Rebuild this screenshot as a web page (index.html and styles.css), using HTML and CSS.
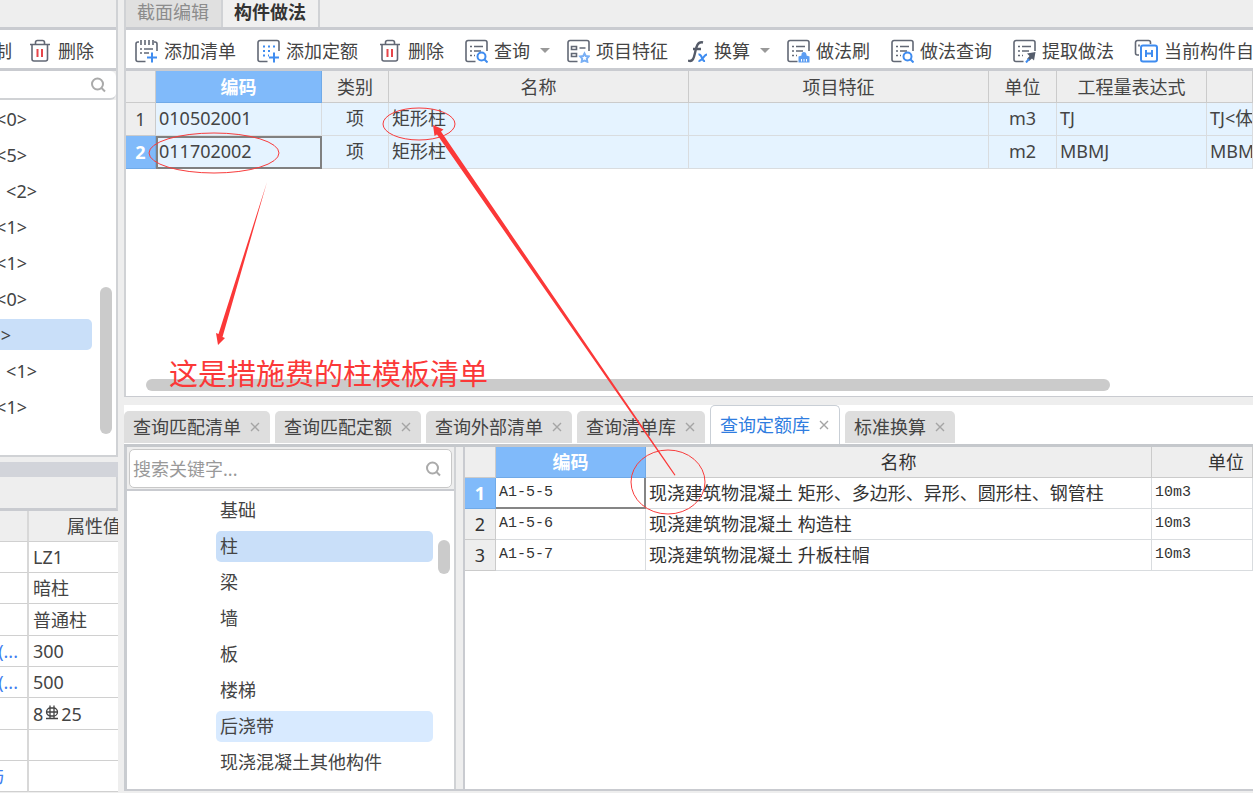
FILE: index.html
```html
<!DOCTYPE html>
<html lang="zh-CN">
<head>
<meta charset="utf-8">
<meta name="viewport" content="width=device-width, initial-scale=1">
<title>构件做法</title>
<link rel="stylesheet" href="styles.css">
</head>
<body>
<svg class="defs" aria-hidden="true">
  <symbol id="trash" viewBox="0 0 24 24">
    <path class="ink" d="M2 5.500h20M4 5.500V20a2 2 0 0 0 2 2h11.500a2 2 0 0 0 2-2V5.500M7.500 5V3.500a2 2 0 0 1 2-2h5a2 2 0 0 1 2 2V5"/>
    <path class="alert" d="M9.500 10v8M14 10v8"/>
  </symbol>
  <symbol id="doc" viewBox="0 0 24 24">
    <path class="ink" d="M11.500 22.500H4a2 2 0 0 1-2-2V3.500a2 2 0 0 1 2-2h17a2 2 0 0 1 2 2V12"/>
  </symbol>
  <symbol id="lines" viewBox="0 0 24 24">
    <path class="ink" d="M6 7.500h2M10 7.500h9M6 12h2M10 12h7M6 16.500h2M10 16.500h1"/>
  </symbol>
  <symbol id="plus" viewBox="0 0 24 24">
    <path class="blue" d="M18 13.500v10M13 18.500h10"/>
  </symbol>
  <symbol id="lens" viewBox="0 0 24 24">
    <circle class="blue" cx="17.500" cy="17.500" r="4"/>
    <path class="blue" d="M20.500 20.500l3 3"/>
  </symbol>
  <symbol id="find" viewBox="0 0 16 16">
    <circle class="gray" cx="7.500" cy="7" r="5.500"/>
    <path class="gray" d="M11.500 11l3.500 3.500"/>
  </symbol>
</svg>

<div class="app">
  <aside class="side">
    <section class="side-top">
      <div class="strip"></div>
      <div class="toolbar side-tools">
        <button type="button">制</button>
        <button type="button"><svg class="icon"><use href="#trash"/></svg>删除</button>
      </div>
      <label class="side-search"><input type="text" aria-label="搜索构件"><svg class="find"><use href="#find"/></svg></label>
      <div class="side-body">
        <ul class="components">
          <li>&lt;0&gt;</li>
          <li>&lt;5&gt;</li>
          <li class="wide">&lt;2&gt;</li>
          <li>&lt;1&gt;</li>
          <li>&lt;1&gt;</li>
          <li>&lt;0&gt;</li>
          <li class="short current">&gt;</li>
          <li class="wide">&lt;1&gt;</li>
          <li>&lt;1&gt;</li>
        </ul>
        <div class="thumb"></div>
      </div>
    </section>
    <section class="props">
      <div class="props-title"></div>
      <div class="props-bar"></div>
      <table class="props-table">
        <colgroup><col class="c-key"><col></colgroup>
        <thead><tr><th></th><th>属性值</th></tr></thead>
        <tbody>
          <tr><td></td><td>LZ1</td></tr>
          <tr><td></td><td>暗柱</td></tr>
          <tr><td></td><td>普通柱</td></tr>
          <tr><td><span class="key">(...</span></td><td>300</td></tr>
          <tr><td><span class="key">(...</span></td><td>500</td></tr>
          <tr><td></td><td>8<svg class="rebar" viewBox="0 0 14 16" role="img" aria-label="钢筋"><rect x="1.500" y="3" width="11" height="8" rx="4"/><path d="M5 0.500v13M9 0.500v13M1 7h12M1 13.500h12"/></svg>25</td></tr>
          <tr><td></td><td></td></tr>
          <tr><td><span class="key tail">与</span></td><td></td></tr>
        </tbody>
      </table>
    </section>
  </aside>

  <main class="work">
    <section class="upper">
      <nav class="strip view-tabs">
        <button type="button">截面编辑</button>
        <button type="button" class="active">构件做法</button>
      </nav>
      <div class="toolbar">
        <button type="button"><svg class="icon" viewBox="0 0 24 24"><path class="ink" d="M11.500 22.500H4a2 2 0 0 1-2-2V5a2 2 0 0 1 2-2h1M20 3h1a2 2 0 0 1 2 2v7M7 1v5M11 1v5M15 1v5M19 1v5M6 10h2M10 10h9M6 14h2M10 14h5"/><use href="#plus"/></svg>添加清单</button>
        <button type="button"><svg class="icon" viewBox="0 0 24 24"><use href="#doc"/><path class="blue" d="M7 7.500h2M12 7.500h2M17 7.500h2M7 12h2M12 12h2M7 16.500h2M12 16.500h1"/><use href="#plus"/></svg>添加定额</button>
        <button type="button"><svg class="icon"><use href="#trash"/></svg>删除</button>
        <button type="button" class="has-menu"><svg class="icon" viewBox="0 0 24 24"><use href="#doc"/><use href="#lines"/><use href="#lens"/></svg>查询<i class="caret"></i></button>
        <button type="button"><svg class="icon" viewBox="0 0 24 24"><path class="ink" d="M11.500 22.500H4a2 2 0 0 1-2-2V3.500a2 2 0 0 1 2-2h17a2 2 0 0 1 2 2V12M5.500 7.500h5v3h-5zM5.500 14.500h5v3h-5zM13.500 9h6"/><path class="blue star" d="M18.500 14.500l1.300 2.500 3 .4-2 2.300.5 3-2.800-1.200-2.800 1.200.5-3-2-2.300 3-.4z"/></svg>项目特征</button>
        <button type="button" class="has-menu"><svg class="icon fx" viewBox="0 0 20 24"><path class="curve" d="M0 21.500c5 2 6-3 7-7.500s2-12 8-10.500M5 10h8"/><path class="blue" d="M10.500 15.500c4-1 3 7 6.500 6.500"/><path class="blue" d="M19 15.500c-3 0-5 7-8.500 6.500"/></svg>换算<i class="caret"></i></button>
        <button type="button"><svg class="icon" viewBox="0 0 24 24"><use href="#doc"/><use href="#lines"/><path class="solid" d="M12.500 23.500V17.500l3-1V15.500a2.500 2.500 0 0 1 5 0v1l3 1v6z"/><path class="slots" d="M15.500 20v2.500M18 20v2.500M20.500 20v2.500"/></svg>做法刷</button>
        <button type="button"><svg class="icon" viewBox="0 0 24 24"><use href="#doc"/><use href="#lines"/><use href="#lens"/></svg>做法查询</button>
        <button type="button"><svg class="icon" viewBox="0 0 24 24"><use href="#doc"/><use href="#lines"/><path class="arrowhead" d="M15 14.500l8.500-1.500-1.500 8.500-2-2-3 2.500-2-2 2.500-3z"/><path class="blue" d="M14 23.500l3-3.500"/></svg>提取做法</button>
        <button type="button"><svg class="icon" viewBox="0 0 24 24"><path class="ink" d="M5 16H3.500a2 2 0 0 1-2-2V3.500a2 2 0 0 1 2-2h11a2 2 0 0 1 2 2V5M5 5.500v2"/><rect class="blue" x="7" y="6.500" width="16" height="16" rx="2"/><path class="blue" d="M12 11v7M18 11v7M12 14.500h6"/></svg>当前构件自动套做法</button>
      </div>
      <table class="grid list">
        <colgroup><col class="c-no"><col class="c-code"><col class="c-kind"><col class="c-name"><col class="c-name"><col class="c-unit"><col class="c-expr"><col></colgroup>
        <thead><tr><th></th><th class="picked">编码</th><th>类别</th><th>名称</th><th>项目特征</th><th>单位</th><th>工程量表达式</th><th></th></tr></thead>
        <tbody>
          <tr><th>1</th><td>010502001</td><td class="mid">项</td><td>矩形柱</td><td></td><td class="mid">m3</td><td>TJ</td><td>TJ&lt;体积&gt;</td></tr>
          <tr><th class="picked">2</th><td class="focus">011702002</td><td class="mid">项</td><td>矩形柱</td><td></td><td class="mid">m2</td><td>MBMJ</td><td>MBMJ&lt;模板面积&gt;</td></tr>
        </tbody>
      </table>
      <div class="hscroll"></div>
    </section>

    <section class="lower">
      <nav class="query-tabs">
        <button type="button">查询匹配清单<svg class="x" viewBox="0 0 10 10"><path d="M1 1l8 8M9 1l-8 8"/></svg></button>
        <button type="button">查询匹配定额<svg class="x" viewBox="0 0 10 10"><path d="M1 1l8 8M9 1l-8 8"/></svg></button>
        <button type="button">查询外部清单<svg class="x" viewBox="0 0 10 10"><path d="M1 1l8 8M9 1l-8 8"/></svg></button>
        <button type="button">查询清单库<svg class="x" viewBox="0 0 10 10"><path d="M1 1l8 8M9 1l-8 8"/></svg></button>
        <button type="button" class="active">查询定额库<svg class="x" viewBox="0 0 10 10"><path d="M1 1l8 8M9 1l-8 8"/></svg></button>
        <button type="button">标准换算<svg class="x" viewBox="0 0 10 10"><path d="M1 1l8 8M9 1l-8 8"/></svg></button>
      </nav>
      <div class="query">
        <div class="tree">
          <div class="tree-search">
            <label><input type="text" placeholder="搜索关键字..." aria-label="搜索关键字"><svg class="find"><use href="#find"/></svg></label>
          </div>
          <div class="tree-body">
            <ul>
              <li>基础</li>
              <li class="current">柱</li>
              <li>梁</li>
              <li>墙</li>
              <li>板</li>
              <li>楼梯</li>
              <li class="hover">后浇带</li>
              <li>现浇混凝土其他构件</li>
            </ul>
            <div class="thumb"></div>
          </div>
        </div>
        <div class="result">
          <table class="grid quota">
            <colgroup><col class="c-no"><col class="c-code"><col class="c-desc"><col></colgroup>
            <thead><tr><th></th><th class="picked">编码</th><th>名称</th><th class="unit">单位</th></tr></thead>
            <tbody>
              <tr><th class="picked">1</th><td class="mono focus">A1-5-5</td><td>现浇建筑物混凝土 矩形、多边形、异形、圆形柱、钢管柱</td><td class="mono">10m3</td></tr>
              <tr><th>2</th><td class="mono">A1-5-6</td><td>现浇建筑物混凝土 构造柱</td><td class="mono">10m3</td></tr>
              <tr><th>3</th><td class="mono">A1-5-7</td><td>现浇建筑物混凝土 升板柱帽</td><td class="mono">10m3</td></tr>
            </tbody>
          </table>
        </div>
      </div>
    </section>
  </main>

  <svg class="marks" aria-hidden="true">
    <ellipse cx="214" cy="153" rx="65" ry="20"/>
    <ellipse cx="419" cy="124" rx="36" ry="16"/>
    <ellipse cx="668" cy="482" rx="37" ry="32"/>
    <path d="M267 182L222.500 337l2.500 1-7 7-2-12 2.500 1z"/>
    <path d="M675.500 475L441 131.500l2.500-2L433 125l1.500 11 2.500-1.500L674.500 475.500z"/>
  </svg>
  <p class="note">这是措施费的柱模板清单</p>
</div>
</body>
</html>
```
FILE: styles.css
```css
* { box-sizing: border-box; }

body {
  margin: 0;
  background: #eee;
  color: #444;
  font: 18px/24px "Noto Sans", "Noto Sans CJK SC", sans-serif;
}

button, input {
  margin: 0;
  padding: 0;
  border: 0;
  background: none;
  color: inherit;
  font: inherit;
}

ul { margin: 0; padding: 0; list-style: none; }

.defs { position: absolute; width: 0; height: 0; }

.ink, .blue, .alert, .gray { fill: none; stroke-width: 1.6; }
.ink { stroke: #626875; }
.blue { stroke: #3f8cf0; stroke-width: 2; }
.star { stroke: #7ab0f5; }
.alert { stroke: #e6454a; stroke-width: 2; }
.gray { stroke: #aaa; stroke-width: 2; }
.solid { fill: #5c9df2; }
.slots { stroke: #fff; stroke-width: 1; }
.arrowhead { fill: #555d6c; }
.curve { fill: none; stroke: #555b68; stroke-width: 2.4; }

.app {
  position: relative;
  display: grid;
  grid-template-columns: 118px minmax(0, 1fr);
  column-gap: 6px;
  height: 100vh;
  overflow: hidden;
}

.strip {
  flex: none;
  height: 30px;
  border-bottom: 3px solid #c9cbd0;
}

.toolbar {
  flex: none;
  display: flex;
  align-items: center;
  gap: 20px;
  height: 41px;
  padding: 3px 0 0 8px;
  overflow: hidden;
  background: #fff;
  border-bottom: 3px solid #c9cbd0;
  white-space: nowrap;
}

.toolbar button { flex: none; display: flex; align-items: center; gap: 6px; }
.toolbar .has-menu { margin-right: -4px; }
.icon { width: 24px; height: 24px; }
.fx { width: 20px; }

.caret {
  margin-left: 4px;
  border: 5px solid transparent;
  border-top-color: #999;
  border-bottom-width: 0;
}

.thumb { width: 12px; border-radius: 6px; background: #cbcbcb; }
.find { flex: none; width: 16px; height: 16px; }

/* left column */
.side {
  display: grid;
  grid-template-columns: minmax(0, 1fr);
  grid-template-rows: minmax(0, 457fr) minmax(0, 331fr);
  row-gap: 5px;
  overflow: hidden;
}

.side-top { display: flex; flex-direction: column; border-right: 2px solid #d0d2d5; }
.side-tools { justify-content: flex-end; gap: 16px; padding: 3px 22px 0 0; }

.side-search {
  display: flex;
  align-items: center;
  height: 29px;
  padding-right: 10px;
  background: #fff;
  border-bottom: 2px solid #d0d2d5;
  border-radius: 0 6px 6px 0;
}
.side-search input { flex: 1; min-width: 0; }

.side-body {
  flex: 1;
  display: flex;
  justify-content: space-between;
  padding-right: 4px;
  background: #fff;
  border-bottom: 2px solid #d0d2d5;
}
.components { width: 92px; padding-top: 3px; }
.components li {
  display: flex;
  justify-content: flex-end;
  align-items: center;
  height: 31px;
  margin-bottom: 5px;
  padding-right: 65px;
  border-radius: 0 5px 5px 0;
}
.components .wide { padding-right: 55px; }
.components .short { padding-right: 81px; }
.components .current { background: #c9dff9; }
.side-body .thumb { height: 147px; margin-top: 187px; }

.props-title { height: 15px; background: #d2d4da; }
.props-bar { height: 34px; border-bottom: 3px solid #c9cbd0; border-right: 2px solid #d0d2d5; }

.props-table { width: 100%; table-layout: fixed; border-collapse: separate; border-spacing: 0; }
.props-table th, .props-table td {
  height: 31px;
  padding: 0;
  overflow: hidden;
  border-bottom: 1px solid #d0d0d0;
  background: #fff;
  white-space: nowrap;
}
.props-table tr > :first-child { border-right: 2px solid #d8d8d8; }
.props-table th { background: #eee; font-weight: 400; text-align: left; padding-left: 38px; }
.props-table td { padding-left: 4px; }
.props-table td:first-child { padding-left: 0; }
.props-table tbody tr:nth-child(3n) td { height: 32px; }
.c-key { width: 29px; }
.key { display: flex; justify-content: flex-end; padding-right: 9px; color: #3f7ff0; }
.tail { padding-right: 22px; }
.rebar { width: 16px; height: 16px; margin: 0 1px; fill: none; stroke: #444; stroke-width: 1.3; }

/* right column */
.work {
  display: grid;
  grid-template-columns: minmax(0, 1fr);
  grid-template-rows: minmax(0, 397fr) minmax(0, 388fr);
  row-gap: 8px;
}

.upper {
  display: flex;
  flex-direction: column;
  overflow: hidden;
  background: #fff;
  border-left: 2px solid #d0d2d5;
  border-bottom: 1px solid #c9cbd0;
}

.view-tabs { display: flex; background: #eee; }
.view-tabs button {
  padding: 0 12px 3px 11px;
  border-right: 2px solid #d0d2d5;
  background: #e0e0e0;
  color: #8c8c8c;
}
.view-tabs .active { background: #f0f0f0; color: #333; font-weight: 700; }

.grid { width: 100%; table-layout: fixed; border-collapse: separate; border-spacing: 0; }
.grid th, .grid td {
  padding: 0 3px;
  overflow: hidden;
  border-right: 1px solid #d9dcdf;
  border-bottom: 1px solid #d9dcdf;
  white-space: nowrap;
  text-align: left;
}
.grid th { background: #eee; border-color: #cbcbcb; font-weight: 400; text-align: center; }
.grid .picked { background: #80bafa; color: #fff; font-weight: 700; border-color: #70aae8; }
.grid .mid { text-align: center; }

.list .c-no { width: 30px; }
.list .c-code { width: 166px; }
.list .c-kind { width: 67px; }
.list .c-name { width: 300px; }
.list .c-unit { width: 68px; }
.list .c-expr { width: 150px; }
.list th { height: 32px; }
.list td { height: 33px; padding-bottom: 2px; background: #e5f3ff; }
.list .focus { border: 2px solid #808080; padding: 0 1px 3px; }

.hscroll { flex: none; height: 12px; margin: auto 143px 5px 20px; border-radius: 6px; background: #cbcbcb; }

.lower { display: flex; flex-direction: column; }

.query-tabs {
  flex: none;
  display: flex;
  align-items: flex-end;
  gap: 5px;
  height: 42px;
  overflow: hidden;
  background: #fff;
  border-bottom: 3px solid #c5c8cc;
  white-space: nowrap;
}
.query-tabs button {
  display: flex;
  align-items: center;
  gap: 9px;
  height: 32px;
  margin-bottom: 1px;
  padding: 0 10px 0 9px;
  border-radius: 5px 5px 0 0;
  background: #dedede;
}
.query-tabs .active {
  height: 39px;
  margin-bottom: 0;
  border: 1px solid #c9cfd6;
  border-bottom: 0;
  background: #fff;
  color: #2f7de0;
}
.x { width: 10px; height: 10px; fill: none; stroke: #a5a5a5; stroke-width: 1.4; }

.query {
  flex: 1;
  display: grid;
  grid-template-columns: 332px minmax(0, 1fr);
  column-gap: 7px;
  min-height: 0;
  margin-bottom: 2px;
  border-bottom: 2px solid #c9cbd0;
}

.tree {
  display: flex;
  flex-direction: column;
  min-height: 0;
  border-left: 3px solid #c9ccd0;
  border-right: 2px solid #d0d2d5;
}
.tree-search { padding: 2px 2px 1px; border-bottom: 2px solid #c9cbd0; }
.tree-search label {
  display: flex;
  align-items: center;
  height: 39px;
  padding: 0 10px 0 3px;
  border: 1px solid #c8c8c8;
  border-radius: 5px;
  background: #fff;
}
.tree-search input { flex: 1; min-width: 0; }
.tree-search input::placeholder { color: #999; opacity: 1; }
.tree-body { flex: 1; display: flex; min-height: 0; background: #fff; }
.tree ul { flex: 1; padding: 4px 5px 0 89px; }
.tree li { height: 31px; margin-bottom: 5px; padding: 3px 4px; border-radius: 5px; white-space: nowrap; }
.tree .current { background: #c9dff9; }
.tree .hover { background: #d8eaff; }
.tree .thumb { height: 34px; margin: 49px 4px 0 0; }

.result { overflow: hidden; background: #fff; border-left: 2px solid #c9cbd0; }
.quota { color: #333; }
.quota .c-no { width: 31px; }
.quota .c-code { width: 150px; }
.quota .c-desc { width: 506px; }
.quota th, .quota td { height: 31px; }
.quota .mono { font-family: "Liberation Mono", monospace; font-size: 15px; }
.quota .focus { border-right: 2px solid #858585; border-bottom: 2px solid #858585; }
.quota .unit { text-align: left; padding-left: 56px; }

/* hand-drawn review marks over the window */
.marks { position: absolute; inset: 0; width: 100%; height: 100%; pointer-events: none; }
.marks ellipse { fill: none; stroke: #f83c3c; stroke-width: 1; }
.marks path { fill: #fb3838; }
.note {
  position: absolute;
  left: 169px;
  top: 354px;
  margin: 0;
  color: #fb3838;
  font-size: 29px;
  line-height: 40px;
}
```
